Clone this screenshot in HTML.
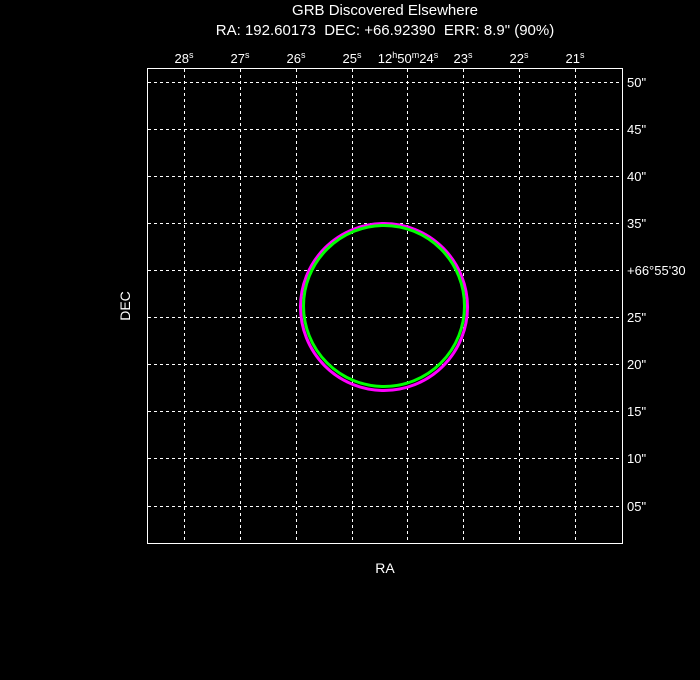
<!DOCTYPE html>
<html><head><style>
html,body{margin:0;padding:0;background:#000;}
svg{display:block}
text{font-family:"Liberation Sans","DejaVu Sans",sans-serif;fill:#fff;white-space:pre;}
</style></head><body>
<svg width="700" height="680" viewBox="0 0 700 680" xmlns="http://www.w3.org/2000/svg" xml:space="preserve">
<text x="385" y="15" font-size="15" text-anchor="middle">GRB Discovered Elsewhere</text>
<text x="385" y="35" font-size="15" text-anchor="middle">RA: 192.60173  DEC: +66.92390  ERR: 8.9" (90%)</text>
<g stroke="#fff" stroke-width="1" stroke-dasharray="3,3" fill="none">
<line x1="184.5" y1="69" x2="184.5" y2="543"/>
<line x1="240.5" y1="69" x2="240.5" y2="543"/>
<line x1="296.5" y1="69" x2="296.5" y2="543"/>
<line x1="352.5" y1="69" x2="352.5" y2="543"/>
<line x1="407.5" y1="69" x2="407.5" y2="543"/>
<line x1="463.5" y1="69" x2="463.5" y2="543"/>
<line x1="519.5" y1="69" x2="519.5" y2="543"/>
<line x1="575.5" y1="69" x2="575.5" y2="543"/>
<line x1="148" y1="82.5" x2="622" y2="82.5"/>
<line x1="148" y1="129.5" x2="622" y2="129.5"/>
<line x1="148" y1="176.5" x2="622" y2="176.5"/>
<line x1="148" y1="223.5" x2="622" y2="223.5"/>
<line x1="148" y1="270.5" x2="622" y2="270.5"/>
<line x1="148" y1="317.5" x2="622" y2="317.5"/>
<line x1="148" y1="364.5" x2="622" y2="364.5"/>
<line x1="148" y1="411.5" x2="622" y2="411.5"/>
<line x1="148" y1="458.5" x2="622" y2="458.5"/>
<line x1="148" y1="506.5" x2="622" y2="506.5"/>
</g>
<rect x="147.5" y="68.5" width="475" height="475" fill="none" stroke="#fff" stroke-width="1"/>
<circle cx="384" cy="307" r="83.5" fill="none" stroke="#ff00ff" stroke-width="3"/>
<circle cx="384" cy="306" r="80.5" fill="none" stroke="#00ff00" stroke-width="3"/>
<g font-size="13" text-anchor="middle">
<text x="184" y="63">28<tspan font-size="9" dy="-5">s</tspan></text>
<text x="240" y="63">27<tspan font-size="9" dy="-5">s</tspan></text>
<text x="296" y="63">26<tspan font-size="9" dy="-5">s</tspan></text>
<text x="352" y="63">25<tspan font-size="9" dy="-5">s</tspan></text>
<text x="408" y="63">12<tspan font-size="9" dy="-5">h</tspan><tspan dy="5">50</tspan><tspan font-size="9" dy="-5">m</tspan><tspan dy="5">24</tspan><tspan font-size="9" dy="-5">s</tspan></text>
<text x="463" y="63">23<tspan font-size="9" dy="-5">s</tspan></text>
<text x="519" y="63">22<tspan font-size="9" dy="-5">s</tspan></text>
<text x="575" y="63">21<tspan font-size="9" dy="-5">s</tspan></text>
</g>
<g font-size="13">
<text x="627" y="87">50"</text>
<text x="627" y="134">45"</text>
<text x="627" y="181">40"</text>
<text x="627" y="228">35"</text>
<text x="627" y="275">+66°55'30</text>
<text x="627" y="322">25"</text>
<text x="627" y="369">20"</text>
<text x="627" y="416">15"</text>
<text x="627" y="463">10"</text>
<text x="627" y="511">05"</text>
</g>
<text x="385" y="573" font-size="14" text-anchor="middle">RA</text>
<text x="130" y="306" font-size="14" text-anchor="middle" transform="rotate(-90 130 306)">DEC</text>
</svg>
</body></html>
